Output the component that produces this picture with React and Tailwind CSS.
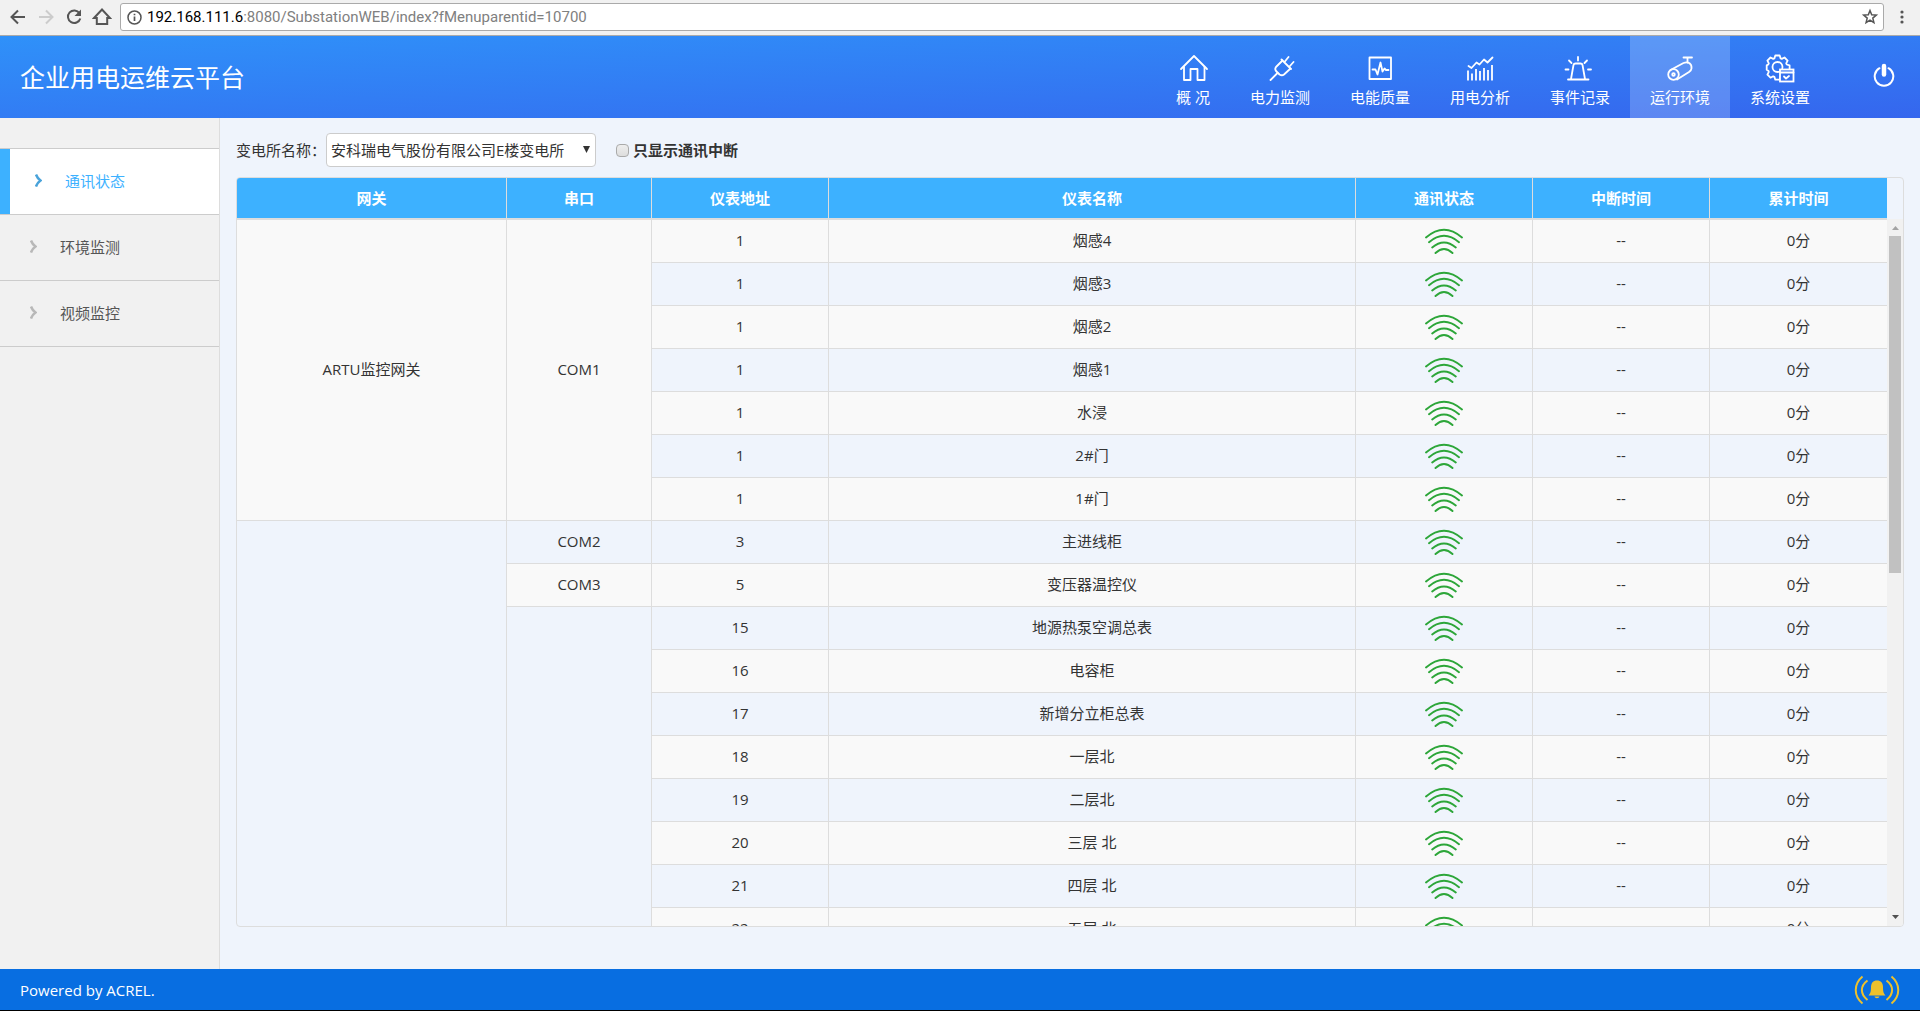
import { useState } from "react";

const NAV_ITEMS = [
  { label: "概 况", icon: HomeIcon },
  { label: "电力监测", icon: PlugIcon },
  { label: "电能质量", icon: PulseIcon },
  { label: "用电分析", icon: ChartIcon },
  { label: "事件记录", icon: SirenIcon },
  { label: "运行环境", icon: CameraIcon },
  { label: "系统设置", icon: GearIcon },
];

const SIDE_ITEMS = ["通讯状态", "环境监测", "视频监控"];

const COLUMNS = [
  { title: "网关", width: "w-[270px]" },
  { title: "串口", width: "w-[145px]" },
  { title: "仪表地址", width: "w-[177px]" },
  { title: "仪表名称", width: "" },
  { title: "通讯状态", width: "w-[177px]" },
  { title: "中断时间", width: "w-[177px]" },
  { title: "累计时间", width: "w-[177px]" },
];

// gateway / port are only set on the row where the merged cell starts
const METERS = [
  {
    gateway: { name: "ARTU监控网关", span: 7 },
    port: { name: "COM1", span: 7 },
    address: 1,
    name: "烟感4",
  },
  { address: 1, name: "烟感3" },
  { address: 1, name: "烟感2" },
  { address: 1, name: "烟感1" },
  { address: 1, name: "水浸" },
  { address: 1, name: "2#门" },
  { address: 1, name: "1#门" },
  {
    gateway: { name: "", span: 10 },
    port: { name: "COM2", span: 1 },
    address: 3,
    name: "主进线柜",
  },
  { port: { name: "COM3", span: 1 }, address: 5, name: "变压器温控仪" },
  { port: { name: "", span: 8 }, address: 15, name: "地源热泵空调总表" },
  { address: 16, name: "电容柜" },
  { address: 17, name: "新增分立柜总表" },
  { address: 18, name: "一层北" },
  { address: 19, name: "二层北" },
  { address: 20, name: "三层 北" },
  { address: 21, name: "四层 北" },
  { address: 22, name: "五层 北" },
];

function NavIcon({ viewBox = "0 0 28 28", children }) {
  return (
    <svg
      width="28"
      height="28"
      viewBox={viewBox}
      fill="none"
      stroke="currentColor"
      strokeWidth="1.8"
      strokeLinecap="round"
      strokeLinejoin="round"
      className="overflow-visible"
    >
      {children}
    </svg>
  );
}

function HomeIcon() {
  return (
    <NavIcon viewBox="-1 0 28 28">
      <path d="M1 15 14 2l13 13" />
      <path d="M4 13v13h6.5V15h7v11h7V13" />
    </NavIcon>
  );
}

function PlugIcon() {
  return (
    <NavIcon viewBox="-2 0 28 28">
      <path d="M2.5 26l7-7M13.5 5.5l9.5 9.5M16.5 8l4-5M21.5 12.5l4-4.5" />
      <path d="M14.5 6.500 8 13q-1.500 2 0 4l3.500 3.500q2.500 1.500 4.500 0l6.500-6" />
    </NavIcon>
  );
}

function PulseIcon() {
  return (
    <NavIcon>
      <rect x="3.500" y="3.500" width="21.500" height="21.500" />
      <path d="M6.500 15.500h3l2 5 3-12 2 9 2-3 1.500 1.500h2.500" />
    </NavIcon>
  );
}

function ChartIcon() {
  return (
    <NavIcon>
      <path d="M2.500 12l3 2 5-5.500 3 2 4.500-5 3.500 3 5-5" />
      <path
        d="M2 16.500v10M6 19.500v7M10 15v11.500M14 17v9.500M18 14v12.500M22 16v10.500M26 11v15.500"
        strokeLinecap="butt"
      />
    </NavIcon>
  );
}

function SirenIcon() {
  return (
    <NavIcon viewBox="2 0 28 28">
      <path d="M4 25.500h20.500M7 25l2.500-14q.3-1.500 2-1.500h5q1.700 0 2 1.500L21 25" />
      <path d="M14 3v3.500M5 6.500 7.500 9M23 6.500 20.500 9M1.500 15.500h3M24 15.500h3" />
    </NavIcon>
  );
}

function CameraIcon() {
  return (
    <NavIcon>
      <path d="M17.500 3.500H26M21.500 3.500v5" />
      <path d="M4.500 16l13-7c5-2 8.500 1 8 5.500 0 1.500-1.500 2.700-2.500 3.500l-12 7.500" />
      <circle cx="7.500" cy="20.500" r="5.300" />
      <circle cx="7.500" cy="20.500" r="1.300" />
    </NavIcon>
  );
}

function GearIcon() {
  return (
    <NavIcon>
      <path d="M9.300 1.500h4.400l.9 2.900 1.200.5 2.700-1.400 3.100 3.100-1.400 2.700.5 1.200 2.900.9v4.400l-2.900.9-.5 1.200 1.400 2.700-3.100 3.100-2.700-1.400-1.200.5-.9 2.900H9.300l-.9-2.900-1.200-.5-2.700 1.400-3.100-3.100 1.400-2.700-.5-1.200-1.600-.9v-4.400l1.600-.9.5-1.200-1.400-2.700 3.100-3.100 2.700 1.400 1.200-.5z" />
      <circle cx="11.500" cy="13" r="5" />
      <rect x="14" y="15.500" width="13.500" height="12" fill="#3570f0" strokeLinejoin="miter" />
      <path d="M14 18.500h13.500M18 22.500l2 2 3-2.500" />
    </NavIcon>
  );
}

function PowerIcon() {
  return (
    <svg width="22" height="24" viewBox="0 0 22 24" fill="none" stroke="currentColor">
      <path d="M6.500 5.200a9.300 9.300 0 1 0 9 0" strokeWidth="2" strokeLinecap="round" />
      <path d="M11 3v8.500" strokeWidth="4.500" strokeLinecap="round" />
    </svg>
  );
}

function SignalIcon() {
  return (
    <svg
      className="mx-auto"
      width="38"
      height="26"
      viewBox="0 0 38 26"
      fill="none"
      stroke="#2da639"
      strokeWidth="1.900"
      strokeLinecap="round"
      role="img"
      aria-label="在线"
    >
      <path d="M1 9.500Q19-6 37 9.500M4 14.200Q19 1.500 34 14.200M7.200 19.500Q19 9.500 30.800 19.500M10.500 25Q19 17 27.500 25" />
    </svg>
  );
}

function BellIcon() {
  return (
    <svg width="46" height="30" viewBox="0 0 46 30" fill="none" stroke="#edc12c" strokeWidth="2">
      <path d="M8.500 1.500C-.5 9-.5 21 8.500 28.500M13.500 5.500C6 11 6 19 13.500 25M37.500 1.500c9 7.500 9 19.500 0 27M32.500 5.500c7.500 5.500 7.500 13.500 0 19.500" />
      <path
        d="M23 5.500c-4 0-6 2.700-6 6.500 0 5-.8 6.700-2.500 8.500h17c-1.700-1.800-2.500-3.500-2.500-8.500 0-3.800-2-6.500-6-6.500zM20.500 21.500h5c-.5 2.300-4.500 2.300-5 0z"
        fill="#edc12c"
        stroke="none"
      />
    </svg>
  );
}

function BrowserBar() {
  return (
    <div className="flex h-9 shrink-0 items-center border-b border-[#aaa] bg-[#f1f1f1] pb-px pl-2 text-[#555]">
      <div className="flex gap-2">
        <button aria-label="后退">
          <svg width="20" height="20" viewBox="0 0 20 20" fill="none" stroke="currentColor" strokeWidth="2">
            <path d="M17 10H4M10 3.500 3.500 10l6.500 6.500" />
          </svg>
        </button>
        <button aria-label="前进" className="text-[#ccc]">
          <svg width="20" height="20" viewBox="0 0 20 20" fill="none" stroke="currentColor" strokeWidth="2">
            <path d="M3 10h13M10 3.500l6.500 6.500-6.500 6.500" />
          </svg>
        </button>
        <button aria-label="刷新">
          <svg width="20" height="20" viewBox="0 0 20 20" fill="none" stroke="currentColor" strokeWidth="2">
            <path d="M15.500 6.200A6.300 6.300 0 1 0 16.300 11.500" />
            <path d="M17 2.500v6.500h-6.500z" fill="currentColor" stroke="none" />
          </svg>
        </button>
        <button aria-label="主页">
          <svg width="20" height="20" viewBox="0 0 20 20" fill="none" stroke="currentColor" strokeWidth="2">
            <path d="M2 11l8-8.500 8 8.500h-2.800v6H4.800v-6z" />
          </svg>
        </button>
      </div>

      <div className="ml-2 flex h-7 flex-1 items-center rounded-[3px] border border-[#aaa] bg-white pl-1.5 pr-1">
        <svg width="15" height="15" viewBox="0 0 15 15" fill="none" stroke="currentColor" strokeWidth="1.500">
          <circle cx="7.500" cy="7.500" r="6.500" />
          <path d="M7.500 6.500V11M7.500 3.700v1.600" strokeWidth="1.700" />
        </svg>
        <p className="ml-[5px] flex-1 font-['Roboto',sans-serif] text-[#808080]">
          <span className="text-black">192.168.111.6</span>
          :8080/SubstationWEB/index?fMenuparentid=10700
        </p>
        <button aria-label="收藏">
          <svg width="18" height="18" viewBox="0 0 18 18" fill="none" stroke="currentColor" strokeWidth="1.500">
            <path d="M9 2.500l1.700 4.300 4.600.3-3.500 3 1.100 4.500L9 12.100l-3.900 2.500 1.100-4.500-3.500-3 4.600-.3z" />
          </svg>
        </button>
      </div>

      <button aria-label="菜单" className="flex w-9 justify-center">
        <svg width="4" height="14" viewBox="0 0 4 14" fill="currentColor">
          <circle cx="2" cy="2" r="1.600" />
          <circle cx="2" cy="7" r="1.600" />
          <circle cx="2" cy="12" r="1.600" />
        </svg>
      </button>
    </div>
  );
}

function Header() {
  return (
    <header className="flex h-[82px] shrink-0 items-center bg-linear-to-br from-[#2f91f9] to-[#3566ee] text-white">
      <h1 className="flex-1 pl-5 text-[25px]">企业用电运维云平台</h1>
      <nav className="flex h-full">
        {NAV_ITEMS.map(({ label, icon: Icon }) => (
          <a
            key={label}
            href="#"
            className={`flex flex-col items-center px-5 pt-[18px] ${
              label === "运行环境" ? "bg-white/20" : ""
            }`}
          >
            <Icon />
            <span className="mt-[3px] whitespace-nowrap leading-6">{label}</span>
          </a>
        ))}
      </nav>
      <button aria-label="退出" className="ml-[43px] mr-[25px] pb-1">
        <PowerIcon />
      </button>
    </header>
  );
}

function Sidebar() {
  const [active, setActive] = useState(SIDE_ITEMS[0]);

  return (
    <aside className="w-[220px] shrink-0 border-r border-[#ddd] bg-[#f1f1f1] pt-[30px]">
      <ul className="border-t border-[#ccc]">
        {SIDE_ITEMS.map((item) => (
          <li key={item} className="border-b border-[#ccc]">
            <a
              href="#"
              onClick={() => setActive(item)}
              className={`flex h-[65px] items-center gap-[23px] pb-0.5 ${
                item === active
                  ? "border-l-10 border-[#3db1ff] bg-white pl-[25px] text-[#3db1ff]"
                  : "pl-[30px] text-[#555]"
              }`}
            >
              <svg
                className={item === active ? "text-[#4aa3da]" : "text-[#b8b8b8]"}
                width="7"
                height="13"
                viewBox="0 0 7 13"
                fill="none"
                stroke="currentColor"
                strokeWidth="2.500"
              >
                <path d="M1 .5q1.500 4 4.500 6-3 2-4.500 6" />
              </svg>
              {item}
            </a>
          </li>
        ))}
      </ul>
    </aside>
  );
}

function Columns() {
  return (
    <colgroup>
      {COLUMNS.map((col) => (
        <col key={col.title} className={col.width} />
      ))}
    </colgroup>
  );
}

function MeterTable() {
  const cell = "border-r border-b border-[#ddd] last:border-r-0";
  const textCell = `${cell} pb-0.5`;

  return (
    <div className="flex min-h-0 flex-1 flex-col overflow-hidden rounded border border-[#ddd]">
      <div className="shrink-0 pr-4">
        <table className="w-full table-fixed border-separate border-spacing-0">
          <Columns />
          <thead>
            <tr>
              {COLUMNS.map((col) => (
                <th key={col.title} className={`h-[41px] bg-[#3db1ff] font-bold text-white ${cell}`}>
                  {col.title}
                </th>
              ))}
            </tr>
          </thead>
        </table>
      </div>

      <div className="flex min-h-0 flex-1">
        <div className="flex-1 overflow-y-auto [scrollbar-width:none]">
          <table className="w-full table-fixed border-separate border-spacing-0 border-t border-[#ddd] text-center">
            <Columns />
            <tbody>
              {METERS.map((m) => (
                <tr key={m.name} className="odd:bg-[#f9f9f9]">
                  {m.gateway && (
                    <td rowSpan={m.gateway.span} className={textCell}>
                      {m.gateway.name}
                    </td>
                  )}
                  {m.port && (
                    <td rowSpan={m.port.span} className={textCell}>
                      {m.port.name}
                    </td>
                  )}
                  <td className={`h-[43px] ${textCell}`}>{m.address}</td>
                  <td className={textCell}>{m.name}</td>
                  <td className={cell}>
                    <SignalIcon />
                  </td>
                  <td className={textCell}>--</td>
                  <td className={textCell}>0分</td>
                </tr>
              ))}
            </tbody>
          </table>
        </div>

        {/* Scrollbar */}
        <div className="flex w-4 shrink-0 flex-col items-center bg-[#f1f1f1]">
          <svg width="17" height="17" viewBox="0 0 17 17" fill="#a3a3a3">
            <path d="M5 11l3.500-4 3.500 4z" />
          </svg>
          <div className="w-full flex-1 px-0.5">
            <div className="h-1/2 bg-[#c1c1c1]"></div>
          </div>
          <svg width="17" height="17" viewBox="0 0 17 17" fill="#505050">
            <path d="M5 6l3.500 4L12 6z" />
          </svg>
        </div>
      </div>
    </div>
  );
}

function App() {
  const [onlyBroken, setOnlyBroken] = useState(false);

  return (
    <div className="flex h-screen flex-col bg-[#eff4fc] font-['Open_Sans','Noto_Sans_CJK_SC',sans-serif] text-[15px] leading-5 text-[#333]">
      <BrowserBar />
      <Header />

      <div className="flex min-h-0 flex-1">
        <Sidebar />
        <main className="flex min-w-0 flex-1 flex-col px-4 pb-[42px] pt-[15px]">
          <div className="mb-[10px] flex h-[34px] items-center">
            <label htmlFor="substation">变电所名称：</label>
            <div className="relative">
              <select
                id="substation"
                className="h-[34px] w-[270px] appearance-none rounded border border-[#ccc] bg-white pl-1"
              >
                <option>安科瑞电气股份有限公司E楼变电所</option>
              </select>
              <svg
                className="pointer-events-none absolute right-1.5 top-[13px]"
                width="7"
                height="7"
                viewBox="0 0 7 7"
                fill="#333"
              >
                <path d="M0 0h7L3.500 7z" />
              </svg>
            </div>
            <label className="ml-5 flex items-center gap-1 font-bold">
              <input
                type="checkbox"
                checked={onlyBroken}
                onChange={(e) => setOnlyBroken(e.target.checked)}
                className="h-[13px] w-[13px] appearance-none rounded-sm border border-[#aaa] bg-linear-to-b from-[#eee] to-[#ddd] checked:bg-[#3db1ff]"
              />
              只显示通讯中断
            </label>
          </div>
          <MeterTable />
        </main>
      </div>

      <footer className="flex h-[42px] shrink-0 items-center justify-between border-b border-black bg-[#086ee1] pl-5 pr-5 text-white">
        <span>Powered by ACREL.</span>
        <BellIcon />
      </footer>
    </div>
  );
}

export default App;
